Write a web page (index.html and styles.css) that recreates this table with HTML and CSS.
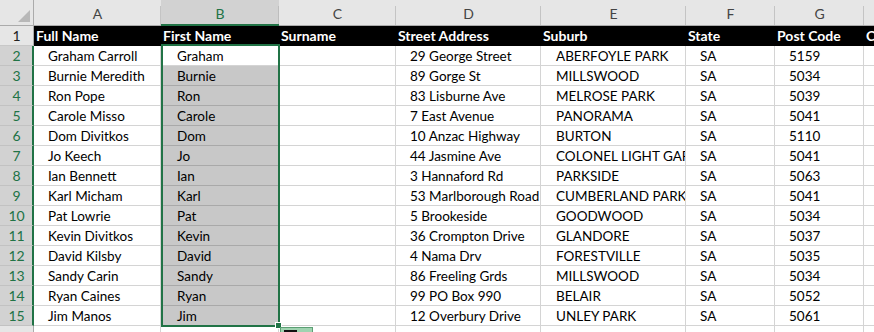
FILE: index.html
```html
<!DOCTYPE html>
<html>
<head>
<meta charset="utf-8">
<link rel="stylesheet" href="styles.css">
</head>
<body>
<div class="viewport">
<div class="sheet">
  <div class="corner"><svg width="12" height="12" viewBox="0 0 12 12"><polygon points="12,0 12,12 0,12" fill="#b8b8b8"/></svg></div>
  <div class="ch">A</div><div class="ch selc">B</div><div class="ch">C</div><div class="ch">D</div><div class="ch">E</div><div class="ch">F</div><div class="ch">G</div><div class="ch">H</div>

  <div class="rh">1</div>
  <div class="hd">Full Name</div><div class="hd">First Name</div><div class="hd">Surname</div><div class="hd">Street Address</div><div class="hd">Suburb</div><div class="hd">State</div><div class="hd">Post Code</div><div class="hd">Country</div>

  <div class="rh selr">2</div><div class="c">Graham Carroll</div><div class="c b act">Graham</div><div class="c"></div><div class="c">29 George Street</div><div class="c e">ABERFOYLE PARK</div><div class="c">SA</div><div class="c">5159</div><div class="c"></div>
  <div class="rh selr">3</div><div class="c">Burnie Meredith</div><div class="c b sel">Burnie</div><div class="c"></div><div class="c">89 Gorge St</div><div class="c e">MILLSWOOD</div><div class="c">SA</div><div class="c">5034</div><div class="c"></div>
  <div class="rh selr">4</div><div class="c">Ron Pope</div><div class="c b sel">Ron</div><div class="c"></div><div class="c">83 Lisburne Ave</div><div class="c e">MELROSE PARK</div><div class="c">SA</div><div class="c">5039</div><div class="c"></div>
  <div class="rh selr">5</div><div class="c">Carole Misso</div><div class="c b sel">Carole</div><div class="c"></div><div class="c">7 East Avenue</div><div class="c e">PANORAMA</div><div class="c">SA</div><div class="c">5041</div><div class="c"></div>
  <div class="rh selr">6</div><div class="c">Dom Divitkos</div><div class="c b sel">Dom</div><div class="c"></div><div class="c">10 Anzac Highway</div><div class="c e">BURTON</div><div class="c">SA</div><div class="c">5110</div><div class="c"></div>
  <div class="rh selr">7</div><div class="c">Jo Keech</div><div class="c b sel">Jo</div><div class="c"></div><div class="c">44 Jasmine Ave</div><div class="c e">COLONEL LIGHT GARDENS</div><div class="c">SA</div><div class="c">5041</div><div class="c"></div>
  <div class="rh selr">8</div><div class="c">Ian Bennett</div><div class="c b sel">Ian</div><div class="c"></div><div class="c">3 Hannaford Rd</div><div class="c e">PARKSIDE</div><div class="c">SA</div><div class="c">5063</div><div class="c"></div>
  <div class="rh selr">9</div><div class="c">Karl Micham</div><div class="c b sel">Karl</div><div class="c"></div><div class="c">53 Marlborough Road</div><div class="c e">CUMBERLAND PARK</div><div class="c">SA</div><div class="c">5041</div><div class="c"></div>
  <div class="rh selr">10</div><div class="c">Pat Lowrie</div><div class="c b sel">Pat</div><div class="c"></div><div class="c">5 Brookeside</div><div class="c e">GOODWOOD</div><div class="c">SA</div><div class="c">5034</div><div class="c"></div>
  <div class="rh selr">11</div><div class="c">Kevin Divitkos</div><div class="c b sel">Kevin</div><div class="c"></div><div class="c">36 Crompton Drive</div><div class="c e">GLANDORE</div><div class="c">SA</div><div class="c">5037</div><div class="c"></div>
  <div class="rh selr">12</div><div class="c">David Kilsby</div><div class="c b sel">David</div><div class="c"></div><div class="c">4 Nama Drv</div><div class="c e">FORESTVILLE</div><div class="c">SA</div><div class="c">5035</div><div class="c"></div>
  <div class="rh selr">13</div><div class="c">Sandy Carin</div><div class="c b sel">Sandy</div><div class="c"></div><div class="c">86 Freeling Grds</div><div class="c e">MILLSWOOD</div><div class="c">SA</div><div class="c">5034</div><div class="c"></div>
  <div class="rh selr">14</div><div class="c">Ryan Caines</div><div class="c b sel">Ryan</div><div class="c"></div><div class="c">99 PO Box 990</div><div class="c e">BELAIR</div><div class="c">SA</div><div class="c">5052</div><div class="c"></div>
  <div class="rh selr">15</div><div class="c">Jim Manos</div><div class="c b sel">Jim</div><div class="c"></div><div class="c">12 Overbury Drive</div><div class="c e">UNLEY PARK</div><div class="c">SA</div><div class="c">5061</div><div class="c"></div>
  <div class="rh"></div><div class="c"></div><div class="c"></div><div class="c"></div><div class="c"></div><div class="c"></div><div class="c"></div><div class="c"></div><div class="c"></div>

  <div class="selbox"></div>
  <div class="handle"></div>
  <div class="qa"><span class="qa-bar"></span></div>
</div>
</div>
</body>
</html>
```

FILE: styles.css
```css
html, body {
  margin: 0;
  padding: 0;
  background: #ffffff;
  overflow: hidden;
}
.viewport {
  width: 874px;
  height: 332px;
  overflow: hidden;
}
.sheet {
  position: relative;
  display: grid;
  grid-template-columns: 34px 127px 118px 117px 145px 145px 89px 89px 120px;
  grid-template-rows: 26px repeat(15, 20px) 20px;
  width: max-content;
  font-family: Lato, "Liberation Sans", sans-serif;
  font-size: 13.5px;
  color: #000;
}
.sheet > div {
  box-sizing: border-box;
  overflow: hidden;
  white-space: nowrap;
}
.corner {
  background: #e6e6e6;
  border-right: 1px solid #ababab;
  border-bottom: 1px solid #ababab;
  display: flex;
  justify-content: flex-end;
  align-items: flex-end;
  padding: 0 3px 3px 0;
}
.corner svg { display: block; }
.ch {
  background: linear-gradient(#c4c4c4, #c4c4c4) right 6px / 1px calc(100% - 6px) no-repeat, #e6e6e6;
  border-bottom: 1px solid #ababab;
  color: #444;
  font-size: 14px;
  text-align: center;
  line-height: 28px;
}
.ch.selc {
  background: linear-gradient(#bdbdbd, #bdbdbd) right 6px / 1px calc(100% - 6px) no-repeat, #d2d2d2;
  color: #217346;
  border-bottom: 2px solid #217346;
}
.rh {
  background: #e6e6e6;
  border-right: 1px solid #ababab;
  border-bottom: 1px solid #c8c8c8;
  text-align: center;
  color: #222;
  line-height: 20px;
  font-size: 14px;
}
.rh.selr {
  background: #d2d2d2;
  color: #217346;
  border-right: 2px solid #217346;
  border-bottom: 1px solid #c2c2c2;
  padding-left: 1px;
}
.hd {
  background: #000;
  color: #fff;
  font-weight: bold;
  font-size: 14px;
  padding-left: 2px;
  line-height: 20px;
}
.c {
  border-right: 1px solid #d4d4d4;
  border-bottom: 1px solid #d4d4d4;
  padding-left: 14px;
  line-height: 20px;
}
.c.b { padding-left: 16px; }
.c.e { padding-left: 15px; }
.c.sel {
  background: #c8c8c8;
  border-bottom-color: #a9a9a9;
}
.selbox {
  position: absolute;
  left: 161px;
  top: 44px;
  width: 119px;
  height: 283px;
  box-sizing: border-box;
  border: 2px solid #217346;
  pointer-events: none;
}
.handle {
  position: absolute;
  left: 275px;
  top: 322px;
  width: 7px;
  height: 7px;
  box-sizing: border-box;
  background: #217346;
  border: 1px solid #ffffff;
}
.qa {
  position: absolute;
  left: 280px;
  top: 327px;
  width: 33px;
  height: 16px;
  box-sizing: border-box;
  background: #9fd3b0;
  border: 1px solid #5c9f74;
  padding: 2px 0 0 3px;
}
.qa-bar {
  display: block;
  width: 13px;
  height: 3px;
  background: #111;
}
```
